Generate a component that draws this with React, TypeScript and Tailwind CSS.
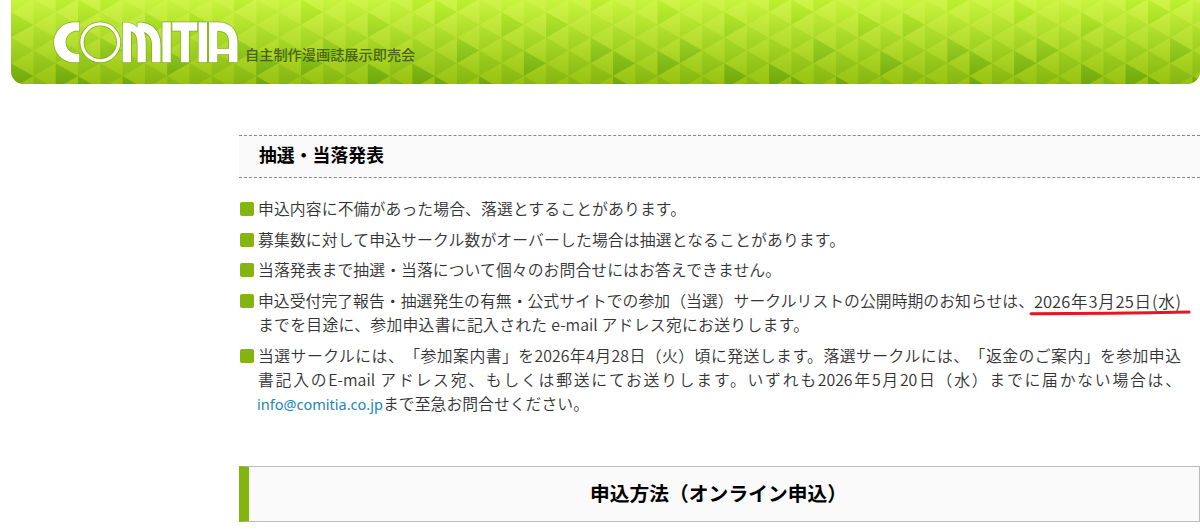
const COL = 22.29;
const ROW = 25.6;
const COLUMNS = 54;

// dark triangles as [column, row], repeated every 16 columns
const DARK = ['0:1', '1:2', '2:1', '4:0', '4:2', '5:2', '5:3', '7:0', '7:2', '8:2', '10:1', '10:3', '12:0', '12:3', '13:0', '13:3', '14:0', '14:2', '15:3'];

function Pattern() {
  const shapes = [];
  for (let k = 0; k < COLUMNS; k++) {
    const x = k * COL + 0.2;
    const top = k % 2 === 0 ? -13.6 : -0.7;
    for (let r = 0; r < 4; r++) {
      const y = top + r * ROW;
      if (DARK.includes(`${(k + 10) % 16}:${r}`)) {
        shapes.push(<path key={`d${k}-${r}`} d={`M${x} ${y}l${COL} ${ROW / 2}l${-COL} ${ROW / 2}z`} fill="url(#dark)" />);
      }
    }
    for (let r = 0; r < 5; r++) {
      const y = top - ROW / 2 + r * ROW;
      shapes.push(<path key={`l${k}-${r}`} d={`M${x + COL} ${y}v${ROW}l${-COL} ${-ROW / 2}z`} fill="url(#light)" />);
    }
  }
  const stops = (a: string, b: string, c: string) => (
    <>
      <stop offset="0" stopColor={a} />
      <stop offset="0.5" stopColor={b} />
      <stop offset="1" stopColor={c} />
    </>
  );
  const line = { gradientUnits: 'userSpaceOnUse' as const, x1: 0, y1: 0, x2: 0, y2: 84 };
  return (
    <svg className="absolute inset-0" width="1189" height="84">
      <defs>
        <linearGradient id="base" {...line}>{stops('#c8f43d', '#a5d525', '#86b510')}</linearGradient>
        <linearGradient id="light" {...line}>{stops('#d0f549', '#b5de30', '#97c211')}</linearGradient>
        <linearGradient id="dark" {...line}>{stops('#bdf02f', '#98cf22', '#6ea80b')}</linearGradient>
      </defs>
      <rect width="1189" height="84" fill="url(#base)" />
      {shapes}
    </svg>
  );
}

function Logo() {
  return (
    <svg className="shrink-0" width="190" height="46" viewBox="51 19 190 46" role="img" aria-label="COMITIA">
      <g fill="#fff" stroke="#7fae1a" strokeWidth="1.4" paintOrder="stroke">
        <path d="M79.3 22.3H74A20 20 0 0 0 74 62.3H79.3V53.8H75A11.7 11.7 0 0 1 75 30.8H79.3z" />
        <path fillRule="evenodd" d="M80.3 42.3a20 20 0 1 0 40 0a20 20 0 1 0-40 0zM83.6 42.3a16.7 16.7 0 1 1 33.4 0a16.7 16.7 0 1 1-33.4 0z" />
        <path d="M122.7 62.3V22.6C130 22.4 134 24 137.5 27.5V22.6C152 22 160.5 31 160.5 45V62.3H152V45C152 38 149 34 144 32C145.5 36 145.8 40 145.8 45V62.3H137.5V45C137.5 37 136 33 131 31.3V62.3z" />
        <path d="M162.4 22.3h8.4v40h-8.4z" />
        <path d="M172.3 22.3h25v8.4h-8.4v31.6h-8V30.7h-8.6z" />
        <path d="M198.6 22.3h8.4v40h-8.4z" />
        <path fillRule="evenodd" d="M209 22.3h9C230 22.3 237.5 30 237.5 42V62.3H229V54.3H217.3V62.3H209zM217.3 30.8V48.8H229V42C229 34.5 225 30.8 217.3 30.8z" />
      </g>
    </svg>
  );
}

function Line({ children, className }: { children: React.ReactNode; className: string }) {
  return <span className={`block h-6 whitespace-nowrap [text-align-last:justify] ${className}`}>{children}</span>;
}

function Item({ children }: { children: React.ReactNode }) {
  return (
    <li className="flex gap-[4px]">
      <span className="mt-[5px] size-[14px] shrink-0 rounded-[2px] bg-[#84b40f]" />
      <div>{children}</div>
    </li>
  );
}

export default function App() {
  return (
    <div className="h-[529px] w-[1200px] overflow-hidden bg-white font-['Noto_Sans_CJK_JP',sans-serif] text-[15.84px] leading-6 text-[#333] [text-spacing-trim:space-all]">
      <header className="relative ml-[11px] h-[84px] overflow-hidden rounded-b-[13px]">
        <Pattern />
        <div className="relative flex pt-[19px] pl-10">
          <Logo />
          <p className="mt-[23px] ml-[4px] w-[170px] text-[14.2px] leading-6 font-medium whitespace-nowrap text-[#4a6614] [text-align-last:justify]">
            自主制作漫画誌展示即売会
          </p>
        </div>
      </header>

      <main className="ml-[239px]">
        <h3 className="mt-[51px] flex h-[43px] items-center border-y border-dashed border-[#888] bg-[#f9f9f9] pb-[5px] pl-5 text-[17.8px] font-bold text-black">
          <span className="w-[125px] whitespace-nowrap [text-align-last:justify]">抽選・当落発表</span>
        </h3>

        <ul className="mt-[19px] ml-[1px] flex flex-col gap-[6.7px] font-[350] text-[#333]">
          <Item>
            <Line className="w-[428px]">申込内容に不備があった場合、落選とすることがあります。</Line>
          </Item>
          <Item>
            <Line className="w-[587px]">募集数に対して申込サークル数がオーバーした場合は抽選となることがあります。</Line>
          </Item>
          <Item>
            <Line className="w-[523px]">当落発表まで抽選・当落について個々のお問合せにはお答えできません。</Line>
          </Item>
          <Item>
            <div className="flex">
              <Line className="w-[776px]">申込受付完了報告・抽選発生の有無・公式サイトでの参加（当選）サークルリストの公開時期のお知らせは、</Line>
              <span className="relative">
                <Line className="w-[147px] text-[16.5px]">2026年3月25日(水)</Line>
                <svg className="absolute top-[20px] -left-[6px]" width="164" height="8" fill="none">
                  <path d="M3 4.7Q80 4.5 161 3" stroke="#e8151f" strokeWidth="3" strokeLinecap="round" />
                </svg>
              </span>
            </div>
            <Line className="w-[551px]">までを目途に、参加申込書に記入された e-mail アドレス宛にお送りします。</Line>
          </Item>
          <Item>
            <Line className="w-[923px]">当選サークルには、「参加案内書」を2026年4月28日（火）頃に発送します。落選サークルには、「返金のご案内」を参加申込</Line>
            <Line className="w-[923px]">書記入のE-mail アドレス宛、もしくは郵送にてお送りします。いずれも2026年5月20日（水）までに届かない場合は、</Line>
            <div className="flex">
              <a href="mailto:info@comitia.co.jp" className="-ml-[1px] w-[126px] font-['Noto_Sans'] text-[14.5px] font-normal whitespace-nowrap text-[#1b87b8]">
                info@comitia.co.jp
              </a>
              <Line className="w-[206px]">まで至急お問合せください。</Line>
            </div>
          </Item>
        </ul>

        <h2 className="mt-[50px] flex h-[56px] items-center justify-center border border-l-10 border-[#bbb] border-l-[#84b40f] bg-[#fafafa] pr-[11px] pb-[1px] text-[19.76px] font-bold text-black">
          <span className="w-[257px] whitespace-nowrap [text-align-last:justify]">申込方法（オンライン申込）</span>
        </h2>
      </main>
    </div>
  );
}
